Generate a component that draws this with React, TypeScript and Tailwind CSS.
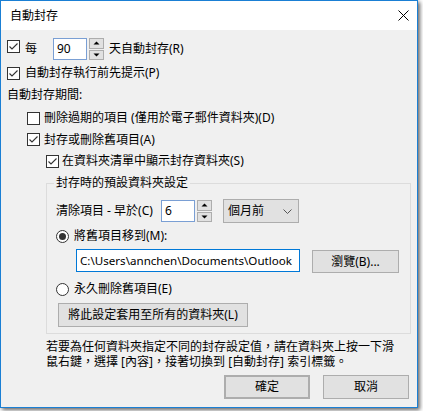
import React from 'react';

const font = { fontFamily: '"Noto Sans", "Noto Sans CJK TC", sans-serif' };

function Check({ checked = false }: { checked?: boolean }) {
  return (
    <span className="inline-flex w-[13px] h-[13px] shrink-0 border border-[#333333] bg-white items-center justify-center">
      {checked && (
        <svg width="11" height="11" viewBox="0 0 11 11">
          <path d="M1.5 5.5 L4 8 L9.5 2.5" fill="none" stroke="#333333" strokeWidth="1.1" />
        </svg>
      )}
    </span>
  );
}

function Radio({ selected = false }: { selected?: boolean }) {
  return (
    <span className="inline-flex w-[13px] h-[13px] shrink-0 rounded-full border border-[#333333] bg-white items-center justify-center">
      {selected && <span className="w-[7px] h-[7px] rounded-full bg-[#333333]" />}
    </span>
  );
}

function Spinner() {
  return (
    <div className="flex flex-col gap-[1px] w-[15px] h-[22px]">
      <div className="flex-1 border border-[#adadad] bg-[#e1e1e1] flex items-center justify-center">
        <svg width="7" height="4" viewBox="0 0 7 4">
          <path d="M0.5 3.5 L3.5 0.5 L6.5 3.5 Z" fill="#000" />
        </svg>
      </div>
      <div className="flex-1 border border-[#adadad] bg-[#e1e1e1] flex items-center justify-center">
        <svg width="7" height="4" viewBox="0 0 7 4">
          <path d="M0.5 0.5 L3.5 3.5 L6.5 0.5 Z" fill="#000" />
        </svg>
      </div>
    </div>
  );
}

function Button({ children, className = '' }: { children: React.ReactNode; className?: string }) {
  return (
    <div className={`flex items-center justify-center bg-[#e1e1e1] border border-[#adadad] text-black ${className}`}>
      {children}
    </div>
  );
}

export default function App() {
  return (
    <div className="w-[423px] h-[411px] bg-white text-[12px] text-black" style={font}>
      <div className="w-[418px] h-[408px] border border-[#1a7fd4] flex flex-col shadow-[2px_2px_4px_rgba(0,0,0,0.6)]">
        {/* Title bar */}
        <div className="h-[29px] bg-white flex items-center justify-between pl-[9px] pr-[8px] shrink-0">
          <span className="leading-none">自動封存</span>
          <svg width="11" height="11" viewBox="0 0 11 11">
            <path d="M0.5 0.5 L10.5 10.5 M10.5 0.5 L0.5 10.5" stroke="#000" strokeWidth="1" />
          </svg>
        </div>

        {/* Body */}
        <div className="flex-1 bg-[#f0f0f0] pl-[6px] pr-[8px] pt-[8px] flex flex-col">
          <div className="flex items-center h-[22px]">
            <span className="mb-[2px]"><Check checked /></span>
            <span className="ml-[5px] w-[28px]">每</span>
            <div className="w-[34px] h-[22px] bg-white border border-[#7a9fd4] flex items-center pl-[3px]">90</div>
            <div className="ml-[2px]"><Spinner /></div>
            <span className="ml-[5px]">天自動封存(R)</span>
          </div>

          <div className="flex items-center h-[22px] mt-[2px]">
            <Check checked />
            <span className="ml-[5px]">自動封存執行前先提示(P)</span>
          </div>

          <div className="flex items-center h-[22px]">
            <span>自動封存期間:</span>
          </div>

          <div className="flex items-center h-[22px] mt-[1px] ml-[20px]">
            <Check />
            <span className="ml-[4px]">刪除過期的項目 (僅用於電子郵件資料夾)(D)</span>
          </div>

          <div className="flex items-center h-[21px] ml-[20px]">
            <Check checked />
            <span className="ml-[4px]">封存或刪除舊項目(A)</span>
          </div>

          <div className="flex items-center h-[22px] ml-[39px]">
            <Check checked />
            <span className="ml-[3px]">在資料夾清單中顯示封存資料夾(S)</span>
          </div>

          <fieldset className="ml-[39px] w-[365px] border border-[#dcdcdc] pl-[7px] pb-[6px]">
            <legend className="px-[2px] leading-[22px]">封存時的預設資料夾設定</legend>

            <div className="flex items-center h-[22px] mt-[6px] ml-[2px]">
              <span className="w-[105px]">清除項目 - 早於(C)</span>
              <div className="w-[34px] h-[22px] bg-white border border-[#7a9fd4] flex items-center pl-[3px]">6</div>
              <div className="ml-[2px]"><Spinner /></div>
              <div className="ml-[11px] w-[76px] h-[24px] bg-[#e1e1e1] border border-[#adadad] flex items-center justify-between pl-[4px] pr-[6px]">
                <span>個月前</span>
                <svg width="9" height="5" viewBox="0 0 9 5">
                  <path d="M0.5 0.5 L4.5 4.5 L8.5 0.5" fill="none" stroke="#555" strokeWidth="1" />
                </svg>
              </div>
            </div>

            <div className="flex items-center h-[22px] mt-[3px] ml-[2px]">
              <Radio selected />
              <span className="ml-[5px]">將舊項目移到(M):</span>
            </div>

            <div className="flex items-start mt-[2px] ml-[22px]">
              <div className="w-[224px] h-[23px] bg-white border border-[#0078d7] flex items-center pl-[3px] overflow-hidden whitespace-nowrap">
                <span className="text-[11.6px]">C:\Users\annchen\Documents\Outlook</span>
              </div>
              <Button className="ml-[12px] mt-[1px] w-[87px] h-[23px]">瀏覽(B)...</Button>
            </div>

            <div className="flex items-center h-[22px] mt-[5px] ml-[2px]">
              <Radio />
              <span className="ml-[5px]">永久刪除舊項目(E)</span>
            </div>

            <Button className="mt-[3px] ml-[4px] w-[190px] h-[24px]">將此設定套用至所有的資料夾(L)</Button>
          </fieldset>

          <div className="ml-[39px] mt-[5px] leading-[15px] whitespace-nowrap">
            <div>若要為任何資料夾指定不同的封存設定值，請在資料夾上按一下滑</div>
            <div>鼠右鍵，選擇 [內容]，接著切換到 [自動封存] 索引標籤。</div>
          </div>

          <div className="flex justify-end gap-[13px] mt-[6px]">
            <Button className="w-[86px] h-[24px] border-2 border-[#0078d7]">確定</Button>
            <Button className="w-[86px] h-[24px]">取消</Button>
          </div>
        </div>
      </div>
    </div>
  );
}
